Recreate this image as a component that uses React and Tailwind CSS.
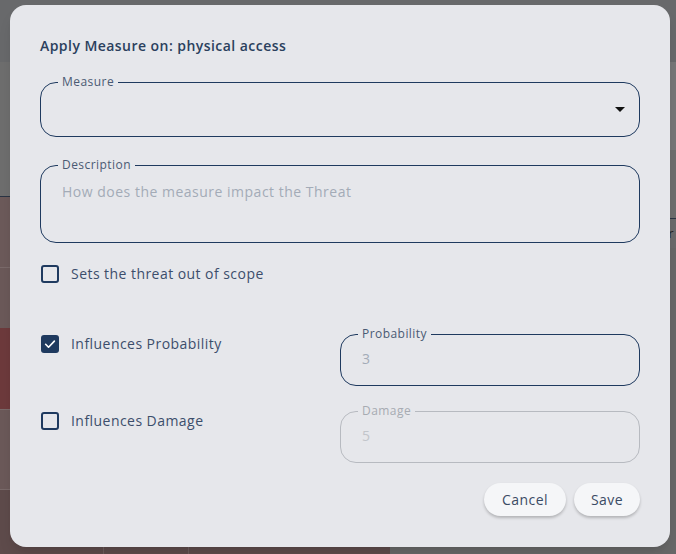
import React from "react";

function Checkbox({ checked }) {
  return checked ? (
    <span className="flex h-[18px] w-[18px] shrink-0 items-center justify-center rounded-[3px] bg-[#1f3a5f]">
      <svg width="14" height="14" viewBox="0 0 24 24" fill="none">
        <path d="M4.5 12.5l5 5L19.5 7" stroke="#fff" strokeWidth="2.8" strokeLinecap="round" strokeLinejoin="round" />
      </svg>
    </span>
  ) : (
    <span className="block h-[18px] w-[18px] shrink-0 rounded-[3px] border-2 border-[#1f3a5f]" />
  );
}

function Field({ label, children, disabled, className = "" }) {
  return (
    <fieldset
      className={`m-0 min-w-0 rounded-[16px] border px-[17px] ${
        disabled ? "border-[#b7bac0]" : "border-[#1f3a5f]"
      } ${className}`}
    >
      <legend
        className={`px-[4px] text-[12px] leading-[16px] ${
          disabled ? "text-[#a7abb2]" : "text-[#4a5a73]"
        }`}
      >
        {label}
      </legend>
      {children}
    </fieldset>
  );
}

export default function App() {
  return (
    <div className="relative h-[554px] w-[676px] overflow-hidden bg-[#6a6a6b] font-['Open_Sans',sans-serif] tracking-[0.45px]">
      {/* dimmed page behind the dialog */}
      <div className="flex h-full flex-col">
        <div className="h-[62px] bg-[#68696b]" />
        <div className="flex h-[134px] bg-[#6e6e6e]">
          <div className="flex-1" />
          <div className="mt-0 h-[88px] w-[30px] bg-[#777778]" />
        </div>
        <div className="flex flex-1">
          <div className="flex w-[390px] flex-col border-t border-[#2a3444]">
            <div className="h-[71px] border-b border-[#7a6a6a] bg-[#6c5a5a]" />
            <div className="h-[60px] bg-[#6b5959]" />
            <div className="h-[82px] border-b border-[#7a6a6a] bg-[#6d3a3c]" />
            <div className="h-[80px] border-b border-[#7a6a6a] bg-[#6b5959]" />
            <div className="flex flex-1 bg-[#5e4b4b]">
              <div className="w-[104px] border-r border-[#6e5d5d]" />
              <div className="w-[85px] border-r border-[#6e5d5d]" />
            </div>
          </div>
          <div className="flex flex-1 flex-col">
            <div className="h-[22px] bg-[#6e6e6e]" />
            <div className="flex h-[30px] items-center justify-end border-t border-[#2a3444] pr-[2px] text-[13px] text-[#222]">
              r
            </div>
            <div className="flex-1 bg-[#686868]" />
          </div>
        </div>
      </div>

      {/* dialog */}
      <div className="absolute left-[10px] top-[5px] flex h-[542px] w-[660px] flex-col rounded-[16px] bg-[#e6e7eb] px-[30px] pt-[31px] shadow-lg">
        <h2 className="text-[14px] font-semibold leading-[20px] text-[#2b3f5d]">
          Apply Measure on: physical access
        </h2>

        <Field label="Measure" className="mt-[18px] h-[63px]">
          <div className="flex h-[39px] items-center justify-end">
            <svg width="10" height="5" viewBox="0 0 10 5" className="mr-[-3px]">
              <path d="M0 0h10L5 5z" fill="#111" />
            </svg>
          </div>
        </Field>

        <Field label="Description" className="mt-[20px] h-[86px]">
          <textarea
            rows={2}
            className="block w-full resize-none bg-transparent pl-[4px] pt-[9px] text-[14px] leading-[20px] tracking-[0.5px] text-[#3b4b64] outline-none placeholder:text-[#a3abb7]"
            placeholder="How does the measure impact the Threat"
          />
        </Field>

        <label className="mt-[21px] flex items-center gap-[12px] pl-[1px] text-[14px] leading-[20px] text-[#3c4e6b]">
          <Checkbox checked={false} />
          Sets the threat out of scope
        </label>

        <div className="mt-[42px] grid grid-cols-2">
          <label className="flex items-start gap-[12px] pl-[1px] pt-[9px] text-[14px] leading-[18px] text-[#3c4e6b]">
            <Checkbox checked />
            Influences Probability
          </label>
          <Field label="Probability" className="h-[60px]">
            <div className="flex h-[34px] items-center pl-[4px] pb-[2px] text-[14px] text-[#a3abb7]">3</div>
          </Field>
        </div>

        <div className="mt-[17px] grid grid-cols-2">
          <label className="flex items-start gap-[12px] pl-[1px] pt-[9px] text-[14px] leading-[18px] text-[#3c4e6b]">
            <Checkbox checked={false} />
            Influences Damage
          </label>
          <Field label="Damage" disabled className="h-[60px]">
            <div className="flex h-[34px] items-center pl-[4px] pb-[2px] text-[14px] text-[#c2c5ca]">5</div>
          </Field>
        </div>

        <div className="mt-[20px] flex justify-end gap-[8px]">
          <button className="h-[33px] w-[82px] rounded-full bg-[#f5f6f8] text-[14px] text-[#3b4b64] shadow-[0_2px_3px_rgba(0,0,0,0.22)]">
            Cancel
          </button>
          <button className="h-[33px] w-[66px] rounded-full bg-[#f5f6f8] text-[14px] text-[#3b4b64] shadow-[0_2px_3px_rgba(0,0,0,0.22)]">
            Save
          </button>
        </div>
      </div>
    </div>
  );
}
